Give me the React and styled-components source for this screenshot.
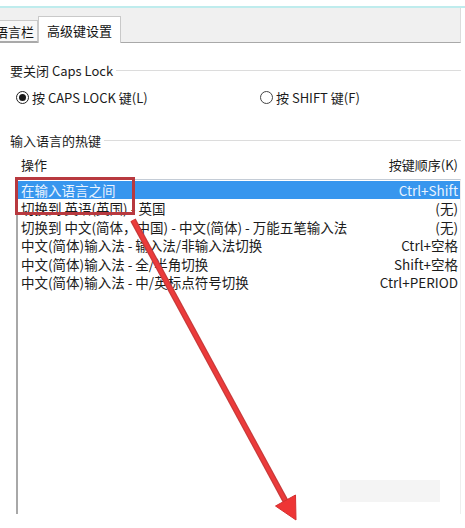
import styled, { createGlobalStyle } from "styled-components";

const GlobalStyle = createGlobalStyle`
  html, body {
    margin: 0;
    padding: 0;
    background: #ffffff;
  }
  body {
    font-family: "Noto Sans CJK SC", "Noto Sans", sans-serif;
    font-size: 13px;
    color: #1b1b1b;
  }
`;

const Page = styled.div`
  position: relative;
  width: 465px;
  height: 528px;
  overflow: hidden;
  background: #fff;
`;

const TopGap = styled.div`
  height: 6px;
  border-bottom: 2px solid #bfeced;
`;

const TabBar = styled.div`
  display: flex;
  align-items: flex-end;
  width: 461px;
  height: 35px;
  background: #f0f0f0;
  border-bottom: 1px solid #a9a9a9;
  border-right: 1px solid #dcdcdc;
  box-sizing: border-box;
  overflow: visible;
`;

const Tab = styled.div`
  height: ${(p) => (p.$active ? "27px" : "22px")};
  margin-bottom: ${(p) => (p.$active ? "-1px" : "0")};
  padding: 0 ${(p) => (p.$active ? "8px" : "3px")};
  display: flex;
  align-items: center;
  box-sizing: border-box;
  background: ${(p) => (p.$active ? "#fff" : "#f7f7f7")};
  border: 1px solid #c9c9c9;
  border-bottom: ${(p) => (p.$active ? "none" : "1px solid #a9a9a9")};
  border-left: ${(p) => (p.$active ? "1px solid #c9c9c9" : "none")};
  margin-left: ${(p) => (p.$first ? "-8px" : "0")};
  font-size: 13px;
  color: #111;
  white-space: nowrap;
  padding-top: ${(p) => (p.$active ? "1px" : "0")};
`;

const Content = styled.div`
  display: flex;
  flex-direction: column;
  padding: 19px 4px 0 10px;
`;

const Legend = styled.div`
  display: flex;
  align-items: center;
  gap: 3px;
  height: 18px;
  line-height: 18px;
  &::after {
    content: "";
    flex: 1;
    height: 1px;
    background: #dcdcdc;
    margin-top: -1px;
  }
`;

const RadioRow = styled.div`
  display: flex;
  align-items: center;
  height: 18px;
  margin-top: 8px;
  padding-left: 6px;
`;

const RadioLabel = styled.label`
  display: flex;
  align-items: center;
  gap: 3px;
  width: ${(p) => p.$width || "auto"};
  white-space: nowrap;
`;

const RadioDot = styled.span`
  width: 11px;
  height: 11px;
  border-radius: 50%;
  border: 1px solid ${(p) => (p.$checked ? "#222" : "#444")};
  display: inline-flex;
  align-items: center;
  justify-content: center;
  box-sizing: content-box;
  &::after {
    content: "";
    width: 7px;
    height: 7px;
    border-radius: 50%;
    background: ${(p) => (p.$checked ? "#1a1a1a" : "transparent")};
  }
`;

const Section = styled.div`
  margin-top: 26px;
  display: flex;
  flex-direction: column;
`;

const HeaderRow = styled.div`
  display: flex;
  justify-content: space-between;
  height: 18px;
  line-height: 18px;
  margin-top: 6px;
  padding: 0 3px 0 11px;
`;

const ListBox = styled.div`
  margin-top: 5px;
  margin-left: 6px;
  width: 442px;
  height: 333px;
  border-left: 2px solid #a8a8a8;
  border-top: 1px solid #c4ccd6;
  border-right: 1px solid #eeeeee;
  display: flex;
  flex-direction: column;
  padding-top: 1px;
`;

const Row = styled.div`
  display: flex;
  justify-content: space-between;
  height: 18.4px;
  line-height: 18.4px;
  padding: 0 2px 0 3px;
  font-size: 13.5px;
  white-space: nowrap;
  background: ${(p) => (p.$selected ? "#3796ee" : "transparent")};
  color: ${(p) => (p.$selected ? "#e9f3ff" : "#1b1b1b")};
`;

const Watermark = styled.div`
  position: absolute;
  left: 340px;
  top: 480px;
  width: 100px;
  height: 22px;
  background: #f4f4f4;
`;

const Overlay = styled.svg`
  position: absolute;
  left: 0;
  top: 0;
  pointer-events: none;
`;

const rows = [
  ["在输入语言之间", "Ctrl+Shift"],
  ["切换到 英语(英国) - 英国", "(无)"],
  ["切换到 中文(简体，中国) - 中文(简体) - 万能五笔输入法", "(无)"],
  ["中文(简体)输入法 - 输入法/非输入法切换", "Ctrl+空格"],
  ["中文(简体)输入法 - 全/半角切换", "Shift+空格"],
  ["中文(简体)输入法 - 中/英标点符号切换", "Ctrl+PERIOD"],
];

const App = () => {
  return (
    <Page>
      <GlobalStyle />
      <TopGap />
      <TabBar>
        <Tab $first>语言栏</Tab>
        <Tab $active>高级键设置</Tab>
      </TabBar>
      <Content>
        <Legend>要关闭 Caps Lock</Legend>
        <RadioRow>
          <RadioLabel $width="244px">
            <RadioDot $checked />
            按 CAPS LOCK 键(L)
          </RadioLabel>
          <RadioLabel>
            <RadioDot />
            按 SHIFT 键(F)
          </RadioLabel>
        </RadioRow>
        <Section>
          <Legend>输入语言的热键</Legend>
          <HeaderRow>
            <span>操作</span>
            <span>按键顺序(K)</span>
          </HeaderRow>
          <ListBox>
            {rows.map(([action, keys], i) => (
              <Row key={action} $selected={i === 0}>
                <span>{action}</span>
                <span>{keys}</span>
              </Row>
            ))}
          </ListBox>
        </Section>
      </Content>
      <Watermark />
      <Overlay width="465" height="528" viewBox="0 0 465 528">
        <rect x="16.5" y="178.5" width="117" height="35" fill="none" stroke="#b8393f" strokeWidth="3" />
        <line x1="133" y1="220" x2="286" y2="502" stroke="#c83a3a" strokeWidth="6" />
        <line x1="133" y1="220" x2="286" y2="502" stroke="#ec3b3b" strokeWidth="3.5" />
        <polygon points="296,520 275.5,506 295.5,495" fill="#ee3535" stroke="#d43030" strokeWidth="1" />
      </Overlay>
    </Page>
  );
};

export default App;
